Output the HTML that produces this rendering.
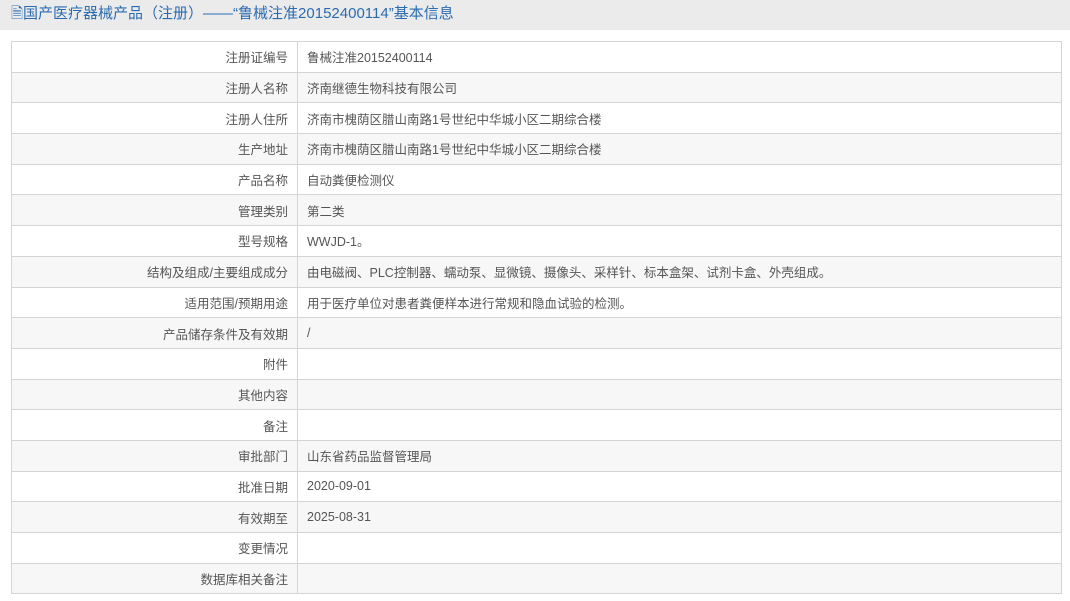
<!DOCTYPE html>
<html><head><meta charset="utf-8"><style>
body{margin:0;background:#fff;font-family:"Liberation Sans","Noto Sans CJK SC",sans-serif;}
.hd{height:30px;background:#ebebeb;color:#2b6cb0;font-size:15px;line-height:28px;padding-left:11px;}
table{position:absolute;left:11px;top:41px;width:1051px;border-collapse:collapse;font-size:12.5px;color:#555;}
td{border:1px solid #d4d4d4;height:29.7px;padding:0 9px;}
td.l{width:267px;text-align:right;}
tr:nth-child(even){background:#f7f7f7;}
</style></head><body>
<div class="hd">🗎国产医疗器械产品（注册）——“鲁械注准20152400114”基本信息</div>
<table>
<tr><td class="l">注册证编号</td><td>鲁械注准20152400114</td></tr>
<tr><td class="l">注册人名称</td><td>济南继德生物科技有限公司</td></tr>
<tr><td class="l">注册人住所</td><td>济南市槐荫区腊山南路1号世纪中华城小区二期综合楼</td></tr>
<tr><td class="l">生产地址</td><td>济南市槐荫区腊山南路1号世纪中华城小区二期综合楼</td></tr>
<tr><td class="l">产品名称</td><td>自动粪便检测仪</td></tr>
<tr><td class="l">管理类别</td><td>第二类</td></tr>
<tr><td class="l">型号规格</td><td>WWJD-1。</td></tr>
<tr><td class="l">结构及组成/主要组成成分</td><td>由电磁阀、PLC控制器、蠕动泵、显微镜、摄像头、采样针、标本盒架、试剂卡盒、外壳组成。</td></tr>
<tr><td class="l">适用范围/预期用途</td><td>用于医疗单位对患者粪便样本进行常规和隐血试验的检测。</td></tr>
<tr><td class="l">产品储存条件及有效期</td><td>/</td></tr>
<tr><td class="l">附件</td><td></td></tr>
<tr><td class="l">其他内容</td><td></td></tr>
<tr><td class="l">备注</td><td></td></tr>
<tr><td class="l">审批部门</td><td>山东省药品监督管理局</td></tr>
<tr><td class="l">批准日期</td><td>2020-09-01</td></tr>
<tr><td class="l">有效期至</td><td>2025-08-31</td></tr>
<tr><td class="l">变更情况</td><td></td></tr>
<tr><td class="l">数据库相关备注</td><td></td></tr>
</table>
</body></html>
